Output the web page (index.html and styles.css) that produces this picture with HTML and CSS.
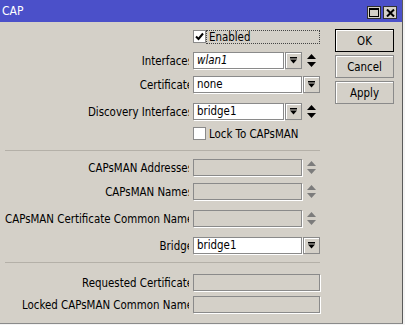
FILE: index.html
```html
<!DOCTYPE html>
<html lang="en">
  <head>
    <meta charset="UTF-8" />
    <meta name="viewport" content="width=device-width, initial-scale=1.0" />
    <title>CAP</title>
    <link rel="stylesheet" href="styles.css">
  </head>
  <body>
    <div class="window">
      <div class="titlebar">
        <span class="title">CAP</span>
        <div class="title-buttons">
          <span class="title-btn">
            <svg width="10" height="9" viewBox="0 0 10 9"><rect x="0.5" y="0.5" width="9" height="8" fill="none" stroke="#000"/><rect x="0" y="0" width="10" height="2" fill="#000"/></svg>
          </span>
          <span class="title-btn">
            <svg width="9" height="8" viewBox="0 0 9 8"><path d="M1 0.5 L8 7.5 M8 0.5 L1 7.5" stroke="#000" stroke-width="2"/></svg>
          </span>
        </div>
      </div>

      <div class="main">
        <div class="form">
          <div class="row first">
            <div class="label"></div>
            <div class="check">
              <span class="box">
                <svg width="9" height="9" viewBox="0 0 9 9"><path d="M1 4.5 L3.5 7 L8 1.5" fill="none" stroke="#000" stroke-width="2"/></svg>
              </span>
              <span class="check-text focused">Enabled</span>
            </div>
          </div>

          <div class="row">
            <div class="label"><span>Interfaces</span></div>
            <div class="field short"><i>wlan1</i></div>
            <span class="drop"><svg width="7" height="7" viewBox="0 0 7 7"><rect width="7" height="1.5"/><polygon points="0,2.5 7,2.5 3.5,6.5"/></svg></span>
            <span class="spin"><svg width="9" height="13" viewBox="0 0 9 13"><polygon points="4.5,0 9,5 0,5"/><polygon points="0,8 9,8 4.5,13"/></svg></span>
          </div>

          <div class="row">
            <div class="label"><span>Certificate</span></div>
            <div class="field">none</div>
            <span class="drop"><svg width="7" height="7" viewBox="0 0 7 7"><rect width="7" height="1.5"/><polygon points="0,2.5 7,2.5 3.5,6.5"/></svg></span>
          </div>

          <div class="row wide">
            <div class="label"><span>Discovery Interfaces</span></div>
            <div class="field short">bridge1</div>
            <span class="drop"><svg width="7" height="7" viewBox="0 0 7 7"><rect width="7" height="1.5"/><polygon points="0,2.5 7,2.5 3.5,6.5"/></svg></span>
            <span class="spin"><svg width="9" height="13" viewBox="0 0 9 13"><polygon points="4.5,0 9,5 0,5"/><polygon points="0,8 9,8 4.5,13"/></svg></span>
          </div>

          <div class="row tight">
            <div class="label"></div>
            <div class="check">
              <span class="box"></span>
              <span class="check-text">Lock To CAPsMAN</span>
            </div>
          </div>

          <div class="separator"></div>

          <div class="row">
            <div class="label"><span>CAPsMAN Addresses</span></div>
            <div class="field disabled"></div>
            <span class="spin off"><svg width="9" height="13" viewBox="0 0 9 13"><polygon points="4.5,0 9,5 0,5"/><polygon points="0,8 9,8 4.5,13"/></svg></span>
          </div>

          <div class="row">
            <div class="label"><span>CAPsMAN Names</span></div>
            <div class="field disabled"></div>
            <span class="spin off"><svg width="9" height="13" viewBox="0 0 9 13"><polygon points="4.5,0 9,5 0,5"/><polygon points="0,8 9,8 4.5,13"/></svg></span>
          </div>

          <div class="row wide">
            <div class="label"><span>CAPsMAN Certificate Common Names</span></div>
            <div class="field disabled"></div>
            <span class="spin off"><svg width="9" height="13" viewBox="0 0 9 13"><polygon points="4.5,0 9,5 0,5"/><polygon points="0,8 9,8 4.5,13"/></svg></span>
          </div>

          <div class="row wide">
            <div class="label"><span>Bridge</span></div>
            <div class="field">bridge1</div>
            <span class="drop"><svg width="7" height="7" viewBox="0 0 7 7"><rect width="7" height="1.5"/><polygon points="0,2.5 7,2.5 3.5,6.5"/></svg></span>
          </div>

          <div class="separator"></div>

          <div class="row wide">
            <div class="label"><span>Requested Certificate</span></div>
            <div class="field disabled long"></div>
          </div>

          <div class="row tight">
            <div class="label"><span>Locked CAPsMAN Common Name</span></div>
            <div class="field disabled long"></div>
          </div>
        </div>

        <div class="buttons">
          <button class="default">OK</button>
          <button>Cancel</button>
          <button>Apply</button>
        </div>
      </div>
    </div>
  </body>
</html>
```

FILE: styles.css
```css
body {
  margin: 0;
  padding: 0;
  background-color: #f4f4f4;
  font-family: "DejaVu Sans Condensed", "DejaVu Sans", sans-serif;
  font-size: 11.4px;
  color: #000;
}

.window {
  width: 402px;
  height: 323px;
  background-color: #d4d0c8;
  border-right: 1px solid #5a5a5a;
  border-bottom: 1px solid #8a8a8a;
}

/* title bar */
.titlebar {
  height: 22px;
  background-color: #4b50c9;
  display: flex;
  align-items: center;
  justify-content: space-between;
}

.title {
  color: #fff;
  font-size: 12px;
  padding-left: 2px;
}

.title-buttons {
  display: flex;
  gap: 2px;
  padding-right: 5px;
  padding-top: 3px;
}

.title-btn {
  width: 12px;
  height: 11px;
  background-color: #d4d0c8;
  border: 1px solid #303030;
  display: flex;
  align-items: center;
  justify-content: center;
}

/* content */
.main {
  display: flex;
}

.form {
  width: 315px;
  padding: 6px 5px 0 5px;
}

.row {
  display: flex;
  align-items: center;
  height: 17px;
  margin-top: 7px;
}

.row.first {
  margin-top: 0;
}

.row.wide {
  margin-top: 10px;
}

.row.tight {
  margin-top: 5px;
}

.label {
  width: 184px;
  margin-right: 4px;
  overflow: hidden;
  white-space: nowrap;
  flex-shrink: 0;
}

.label span {
  display: block;
  text-align: right;
  margin-right: -4px;
}

.field {
  height: 15px;
  line-height: 15px;
  padding: 0 0 0 3px;
  width: 104px;
  background-color: #fff;
  border: 1px solid #8a8a8a;
  box-shadow: 1px 1px 0 #fff;
  white-space: nowrap;
  overflow: hidden;
}

.field.short {
  width: 86px;
}

.field.long {
  width: 122px;
}

.field.disabled {
  background-color: #d4d0c8;
}

.field i {
  font-style: italic;
}

.drop {
  width: 15px;
  height: 15px;
  margin-left: 1px;
  border: 1px solid #8a8a8a;
  box-shadow: inset 1px 1px 0 #fff;
  background-color: #d4d0c8;
  display: flex;
  align-items: center;
  justify-content: center;
}

.spin {
  margin-left: 5px;
  display: flex;
  align-items: center;
}

.spin.off svg {
  fill: #7c7c7c;
}

/* checkboxes */
.check {
  display: flex;
  align-items: center;
}

.box {
  width: 11px;
  height: 11px;
  background-color: #fff;
  border: 1px solid #8a8a8a;
  display: flex;
  align-items: center;
  justify-content: center;
}

.check-text {
  padding: 0 2px;
  line-height: 12px;
  border: 1px solid transparent;
}

.check-text.focused {
  width: 108px;
  border: 1px dotted #444;
}

.separator {
  height: 1px;
  border-top: 1px solid #b4b0a8;
  margin: 8px 0 7px 0;
}

/* buttons */
.buttons {
  display: flex;
  flex-direction: column;
  gap: 3px;
  margin-left: 10px;
  padding-top: 7px;
}

.buttons button {
  width: 59px;
  height: 23px;
  padding: 0;
  background-color: #d4d0c8;
  border: 1px solid #8a8a8a;
  box-shadow: inset 1px 1px 0 #fff;
  font-family: inherit;
  font-size: 11.4px;
  color: #000;
}

.buttons button.default {
  border-color: #000;
}
```
